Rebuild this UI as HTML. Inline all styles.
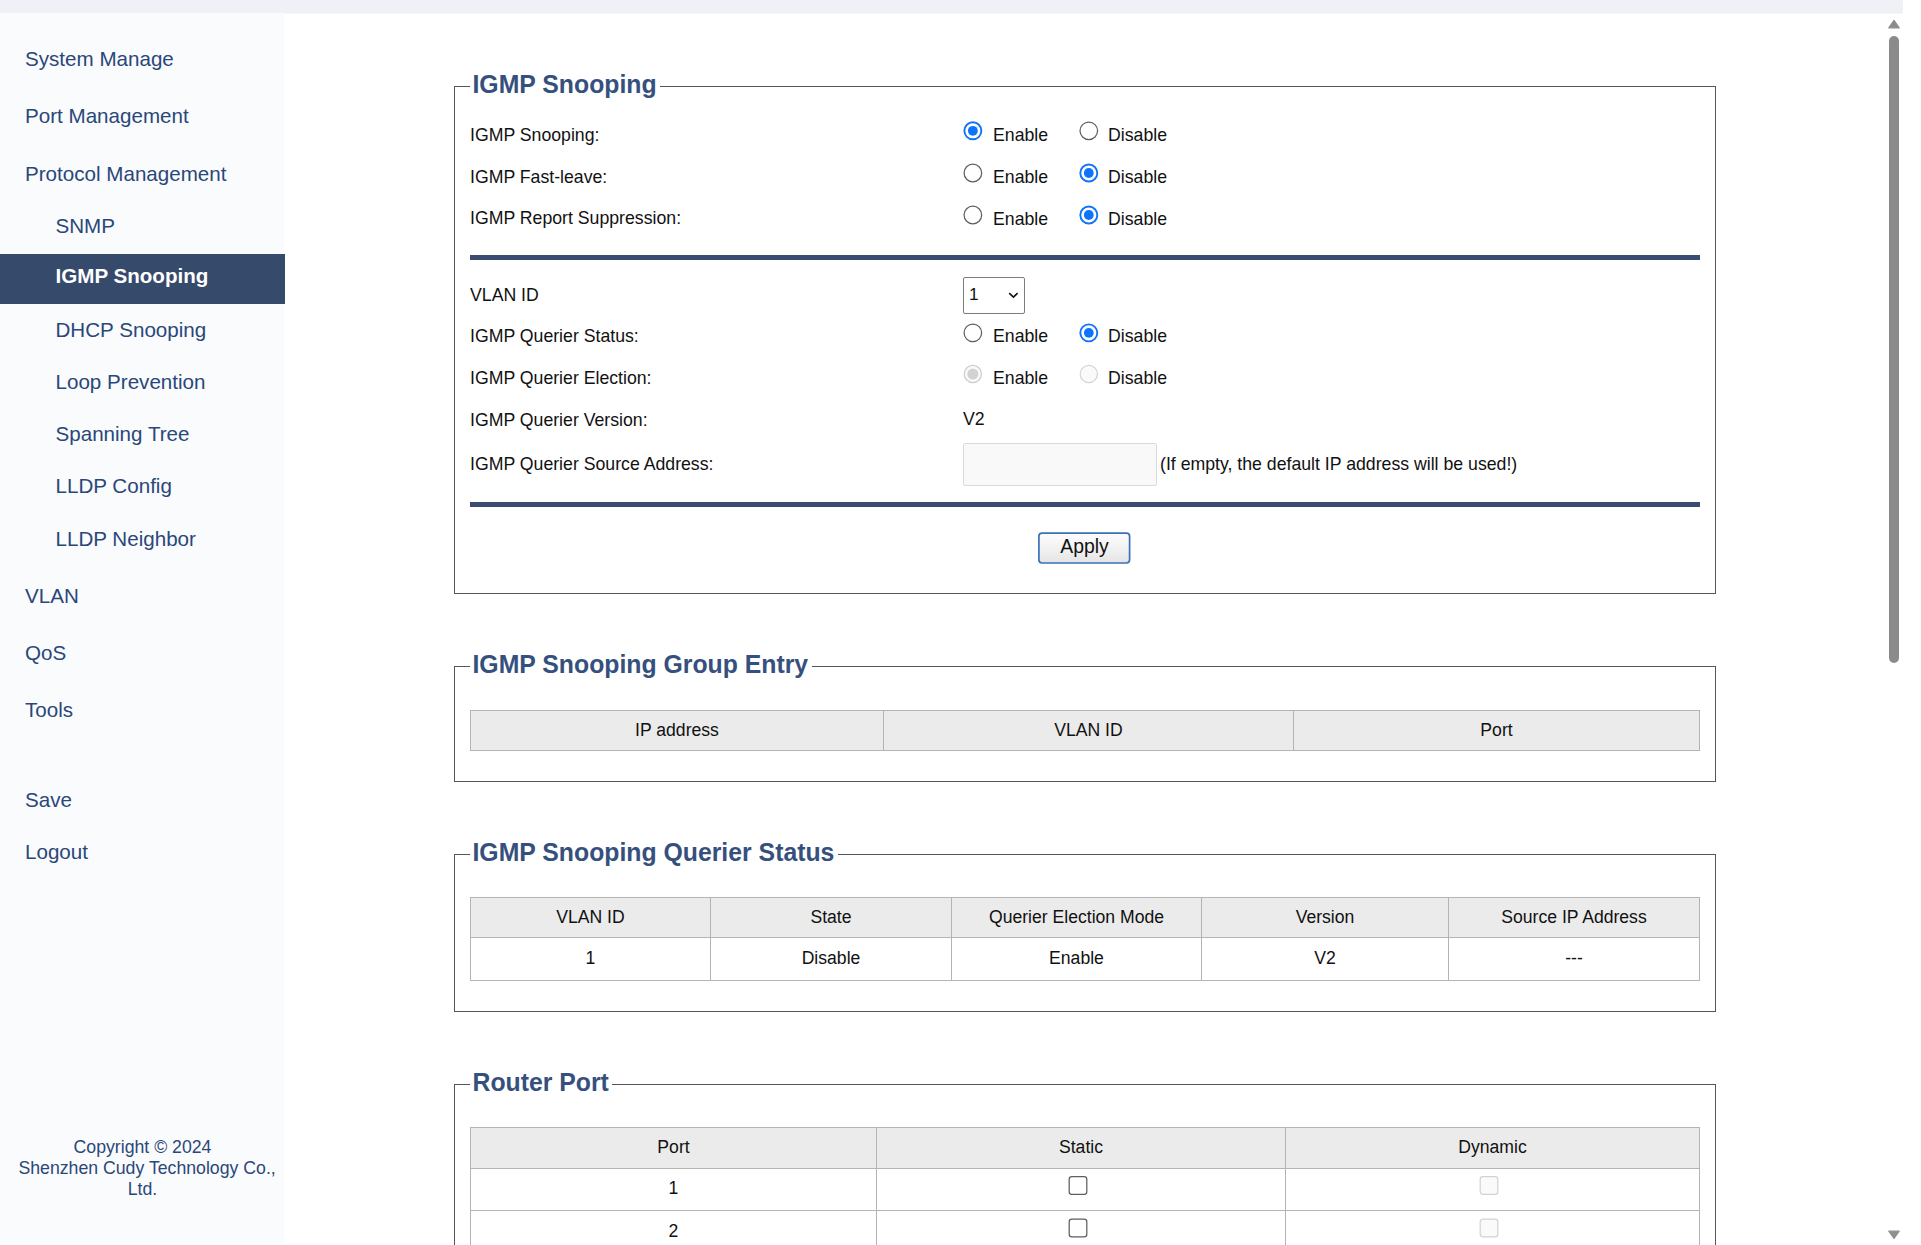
<!DOCTYPE html>
<html>
<head>
<meta charset="utf-8">
<title>IGMP Snooping</title>
<style>
html,body{margin:0;padding:0;}
html{overflow:hidden;}
#page{position:relative;width:1921px;height:1245px;overflow:hidden;background:#fff;}
body{width:1921px;height:1245px;overflow:hidden;background:#fff;position:relative;
  font-family:"Liberation Sans",sans-serif;font-size:17.7px;color:#111;}
*{box-sizing:border-box;}
.abs{position:absolute;}
svg{display:block;overflow:visible;}
#topbar{position:absolute;left:0;top:0;width:1903px;height:14px;background:#eff1f6;border-bottom:1px solid #f6f7fa;}
#side{position:absolute;left:0;top:13px;width:284px;height:1229.5px;background:#fafbfd;}
.mi{position:absolute;left:25px;font-size:20.6px;line-height:24px;height:24px;color:#2a4779;white-space:nowrap;}
.mi.sub{left:55.5px;}
#active{position:absolute;left:0;top:254px;width:285px;height:49.5px;background:#364a6b;}
.mi.act{color:#fff;font-weight:bold;}
#copy{position:absolute;left:0;top:1136.8px;width:285px;text-align:center;font-size:17.7px;line-height:21.25px;color:#2a4779;white-space:nowrap;}
.fs{position:absolute;left:454px;width:1262px;border:1px solid #555;}
.lg{position:absolute;left:469.7px;height:34px;line-height:34px;padding:0 3.5px 0 2.8px;background:#fff;
  font-size:24.8px;font-weight:bold;color:#36507e;white-space:nowrap;transform:scaleY(1.04);transform-origin:0 25.2px;}
.row{position:absolute;left:470px;height:20px;line-height:20px;white-space:nowrap;}
.ctl{position:absolute;left:993px;height:20px;line-height:20px;white-space:nowrap;}
.ctl2{position:absolute;left:1108px;height:20px;line-height:20px;white-space:nowrap;}
.hr{position:absolute;left:470px;width:1230px;height:4.6px;background:#3a4c72;}
table{position:absolute;left:470px;width:1229px;border-collapse:collapse;table-layout:fixed;}
th,td{border:1px solid #b4b4b4;text-align:center;font-weight:normal;padding:0;font-size:17.6px;color:#111;}
th{background:#ebebeb;}
.pb td{padding-bottom:1px;}
</style>
</head>
<body>
<div id="page">
<div id="topbar"></div>
<div id="side"></div>
<div id="active"></div>
<div class="mi" style="top:46.6px">System Manage</div>
<div class="mi" style="top:103.7px">Port Management</div>
<div class="mi" style="top:161.7px">Protocol Management</div>
<div class="mi sub" style="top:213.8px">SNMP</div>
<div class="mi sub act" style="top:264px">IGMP Snooping</div>
<div class="mi sub" style="top:318px">DHCP Snooping</div>
<div class="mi sub" style="top:370px">Loop Prevention</div>
<div class="mi sub" style="top:421.7px">Spanning Tree</div>
<div class="mi sub" style="top:473.8px">LLDP Config</div>
<div class="mi sub" style="top:526.8px">LLDP Neighbor</div>
<div class="mi" style="top:583.5px">VLAN</div>
<div class="mi" style="top:640.8px">QoS</div>
<div class="mi" style="top:697.8px">Tools</div>
<div class="mi" style="top:787.7px">Save</div>
<div class="mi" style="top:839.7px">Logout</div>

<div id="copy">Copyright © 2024<br><span style="position:relative;left:4.6px">Shenzhen Cudy Technology Co.,</span><br>Ltd.</div>

<!-- Fieldset 1 -->
<div class="fs" style="top:86px;height:508px;"></div>
<div class="lg" style="top:67.6px;">IGMP Snooping</div>
<div class="row" style="top:125px">IGMP Snooping:</div>
<svg class="abs" style="left:961px;top:119px" width="23" height="23"><circle cx="11.86" cy="11.8" r="8.5" fill="#fff" stroke="#0f74f9" stroke-width="1.9"/><circle cx="11.86" cy="11.8" r="4.9" fill="#0f74f9"/></svg><div class="ctl" style="top:125px">Enable</div>
<svg class="abs" style="left:1077px;top:119px" width="23" height="23"><circle cx="11.8" cy="11.8" r="8.8" fill="#fff" stroke="#5f5f5f" stroke-width="1.25"/></svg><div class="ctl2" style="top:125px">Disable</div>

<div class="row" style="top:166.5px">IGMP Fast-leave:</div>
<svg class="abs" style="left:961px;top:162px" width="23" height="23"><circle cx="11.86" cy="11.0" r="8.8" fill="#fff" stroke="#5f5f5f" stroke-width="1.25"/></svg><div class="ctl" style="top:166.5px">Enable</div>
<svg class="abs" style="left:1077px;top:162px" width="23" height="23"><circle cx="11.8" cy="11.0" r="8.5" fill="#fff" stroke="#0f74f9" stroke-width="1.9"/><circle cx="11.8" cy="11.0" r="4.9" fill="#0f74f9"/></svg><div class="ctl2" style="top:166.5px">Disable</div>

<div class="row" style="top:208px">IGMP Report Suppression:</div>
<svg class="abs" style="left:961px;top:204px" width="23" height="23"><circle cx="11.86" cy="11.0" r="8.8" fill="#fff" stroke="#5f5f5f" stroke-width="1.25"/></svg><div class="ctl" style="top:208.7px">Enable</div>
<svg class="abs" style="left:1077px;top:204px" width="23" height="23"><circle cx="11.8" cy="11.0" r="8.5" fill="#fff" stroke="#0f74f9" stroke-width="1.9"/><circle cx="11.8" cy="11.0" r="4.9" fill="#0f74f9"/></svg><div class="ctl2" style="top:208.7px">Disable</div>

<div class="hr" style="top:255px"></div>

<div class="row" style="top:285px">VLAN ID</div>
<div class="abs" style="left:963px;top:277px;width:62px;height:37px;border:1px solid #7c7c7c;border-radius:2px;background:#fff;"></div>
<div class="abs" style="left:969px;top:284.3px;line-height:20px;font-size:17.2px">1</div>
<svg class="abs" style="left:1007px;top:291px" width="13" height="9" viewBox="0 0 13 9"><path d="M2.2 2.2 L6.4 6.1 L10.6 2.2" fill="none" stroke="#111" stroke-width="1.6"/></svg>

<div class="row" style="top:326px">IGMP Querier Status:</div>
<svg class="abs" style="left:961px;top:321px" width="23" height="23"><circle cx="11.86" cy="11.85" r="8.8" fill="#fff" stroke="#5f5f5f" stroke-width="1.25"/></svg><div class="ctl" style="top:326px">Enable</div>
<svg class="abs" style="left:1077px;top:321px" width="23" height="23"><circle cx="11.8" cy="11.85" r="8.5" fill="#fff" stroke="#0f74f9" stroke-width="1.9"/><circle cx="11.8" cy="11.85" r="4.9" fill="#0f74f9"/></svg><div class="ctl2" style="top:326px">Disable</div>

<div class="row" style="top:368px">IGMP Querier Election:</div>
<svg class="abs" style="left:961px;top:363px" width="23" height="23"><circle cx="11.86" cy="11.0" r="8.6" fill="#fbfbfb" stroke="#cdcdcd" stroke-width="1.3"/><circle cx="11.86" cy="11.0" r="5.6" fill="#d2d2d2"/></svg><div class="ctl" style="top:368px">Enable</div>
<svg class="abs" style="left:1077px;top:363px" width="23" height="23"><circle cx="11.8" cy="11.0" r="8.6" fill="#fafafa" stroke="#d4d4d4" stroke-width="1.2"/></svg><div class="ctl2" style="top:368px">Disable</div>

<div class="row" style="top:410px">IGMP Querier Version:</div>
<div class="abs" style="left:963px;top:409px;line-height:20px;">V2</div>

<div class="row" style="top:454px">IGMP Querier Source Address:</div>
<div class="abs" style="left:963px;top:443px;width:194px;height:43px;border:1px solid #dadada;border-radius:2px;background:#f9f9f9;"></div>
<div class="abs" style="left:1160px;top:454px;line-height:20px;white-space:nowrap;">(If empty, the default IP address will be used!)</div>

<div class="hr" style="top:502px"></div>

<svg class="abs" style="left:1036px;top:530px" width="98" height="37"><defs><linearGradient id="bg" x1="0" y1="0" x2="0" y2="1"><stop offset="0" stop-color="#fdfdfd"/><stop offset="0.55" stop-color="#f1f1f1"/><stop offset="1" stop-color="#e4e4e4"/></linearGradient></defs>
<rect x="2.9" y="3.1" width="90.7" height="29.9" rx="3.2" fill="url(#bg)" stroke="#3a72b8" stroke-width="1.7"/></svg>
<div class="abs" style="left:1038px;top:534.4px;width:93px;text-align:center;font-size:19.4px;line-height:24px;color:#111;">Apply</div>

<!-- Fieldset 2 -->
<div class="fs" style="top:666px;height:116px;"></div>
<div class="lg" style="top:647.6px;">IGMP Snooping Group Entry</div>
<table style="top:710px;height:40.5px;">
<colgroup><col style="width:413px"><col style="width:410px"><col style="width:406px"></colgroup>
<tr><th>IP address</th><th>VLAN ID</th><th>Port</th></tr>
</table>

<!-- Fieldset 3 -->
<div class="fs" style="top:854px;height:158px;"></div>
<div class="lg" style="top:835.6px;">IGMP Snooping Querier Status</div>
<table style="top:897px;">
<colgroup><col style="width:240px"><col style="width:241px"><col style="width:250px"><col style="width:247px"><col style="width:251px"></colgroup>
<tr style="height:40px"><th>VLAN ID</th><th>State</th><th>Querier Election Mode</th><th>Version</th><th>Source IP Address</th></tr>
<tr style="height:43px" class="pb"><td>1</td><td>Disable</td><td>Enable</td><td>V2</td><td>---</td></tr>
</table>

<!-- Fieldset 4 -->
<div class="fs" style="top:1084px;height:300px;"></div>
<div class="lg" style="top:1065.6px;">Router Port</div>
<table style="top:1127px;">
<colgroup><col style="width:406px"><col style="width:409px"><col style="width:414px"></colgroup>
<tr style="height:41px"><th style="padding-bottom:1px">Port</th><th style="padding-bottom:1px">Static</th><th style="padding-bottom:1px">Dynamic</th></tr>
<tr style="height:42px"><td style="padding-bottom:3px">1</td><td></td><td></td></tr>
<tr style="height:42.5px"><td style="padding-bottom:1px">2</td><td></td><td></td></tr>
<tr style="height:42px"><td>3</td><td></td><td></td></tr>
</table>
<svg class="abs" style="left:1067px;top:1174px" width="23" height="23"><rect x="2.2" y="2.7" width="17.6" height="17.6" rx="2.6" fill="#fff" stroke="#5f5f5f" stroke-width="1.25"/></svg>
<svg class="abs" style="left:1478px;top:1174px" width="23" height="23"><rect x="2.2" y="2.7" width="17.6" height="17.6" rx="2.6" fill="#fafafa" stroke="#d2d2d2" stroke-width="1.2"/></svg>
<svg class="abs" style="left:1067px;top:1217px" width="23" height="23"><rect x="2.2" y="2.2" width="17.6" height="17.6" rx="2.6" fill="#fff" stroke="#5f5f5f" stroke-width="1.25"/></svg>
<svg class="abs" style="left:1478px;top:1217px" width="23" height="23"><rect x="2.2" y="2.2" width="17.6" height="17.6" rx="2.6" fill="#fafafa" stroke="#d2d2d2" stroke-width="1.2"/></svg>

<!-- scrollbar -->
<svg class="abs" style="left:1887px;top:18px" width="14" height="12" viewBox="0 0 14 12"><path d="M7 2.4 L12.2 9.8 L1.8 9.8 Z" fill="#8b8b8b" stroke="#8b8b8b" stroke-width="1.2" stroke-linejoin="round"/></svg>
<div class="abs" style="left:1889px;top:36px;width:10px;height:627px;border-radius:5px;background:#8b8b8b;"></div>
<svg class="abs" style="left:1887px;top:1229px" width="14" height="12" viewBox="0 0 14 12"><path d="M7 9.4 L12.2 2.2 L1.8 2.2 Z" fill="#8f8f8f" stroke="#8f8f8f" stroke-width="1.2" stroke-linejoin="round"/></svg>
</div>
</body>
</html>
